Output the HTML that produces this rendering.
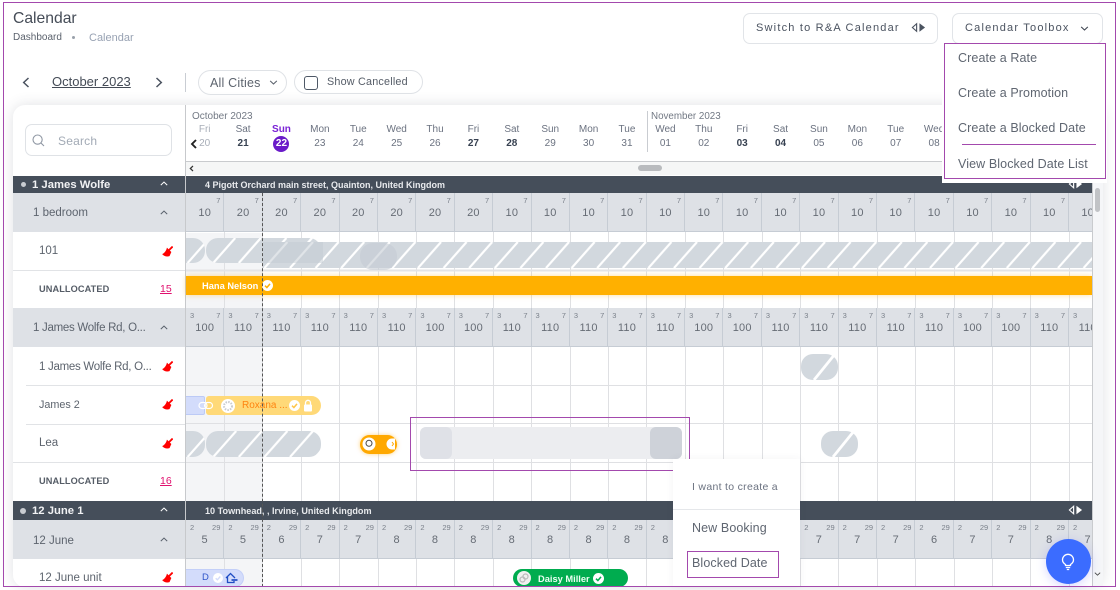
<!DOCTYPE html>
<html lang="en"><head><meta charset="utf-8"><title>Calendar</title>
<style>
*{box-sizing:border-box}
html,body{margin:0;padding:0;width:1120px;height:590px;overflow:hidden;background:#fff;font-family:"Liberation Sans",sans-serif;color:#4b5563}
.t{position:absolute;line-height:0;white-space:nowrap}
.box{position:absolute}
#card{position:absolute;left:13px;top:105px;width:1090px;height:482px;background:#fff;border-radius:12px;box-shadow:0 0 14px rgba(60,70,90,.16)}
.days{position:absolute;left:185.500px;display:flex;width:760px;line-height:12px}
.days span{flex:0 0 38.4px;text-align:center;font-size:10px;color:#6b7280;white-space:nowrap}
.days span.w{font-weight:bold;color:#374151}
.days span.l{color:#a8aeb8}
.g{position:absolute;left:186px;width:906px;height:39px;display:flex;overflow:hidden;background:#dee1e6;border-bottom:1px solid #c6ccd4}
.g i{position:relative;flex:0 0 38.4px;height:39px;border-right:1px solid #c6ccd4;font-style:normal;font-size:11px;color:#666c75;text-align:center;line-height:40px;letter-spacing:.2px}
.g b,.g em{position:absolute;top:3px;font-size:7.5px;line-height:9px;font-weight:normal;font-style:normal;color:#7a808a;letter-spacing:0}
.g b{right:3px}.g em{left:4px}
.lr{position:absolute;left:13px;width:172px;height:39px;background:#dee1e6}
.dk{position:absolute;background:#454e5a}
.sep{position:absolute;height:1px;background:#e1e3e6}
.lbl{font-size:11.5px;color:#5d646e;margin-top:1px}
.un{font-size:9.2px;font-weight:bold;color:#555c66;letter-spacing:.1px}
.cnt{font-size:10.5px;color:#e0106e;text-decoration:underline}
.menu{font-size:12.5px;color:#5f6671;letter-spacing:.1px}
svg.a{position:absolute;overflow:visible}
</style></head><body>
<svg width="0" height="0" style="position:absolute"><defs>
<symbol id="br" viewBox="0 0 12 12"><path d="M11.600.6 7.800 4.400" stroke="#f00" stroke-width="2" fill="none"/><path d="M5.400 1.800 10.200 6.600 8.200 11C5.200 12 2 11 .2 8.800 2.800 7.800 4.600 5.200 5.400 1.800Z" fill="#f00"/></symbol>
<symbol id="up" viewBox="0 0 10 6"><path d="M1 5 5 1.2 9 5" fill="none" stroke="currentColor" stroke-width="1.3"/></symbol>
<symbol id="tg" viewBox="0 0 16 10"><path d="M6 1 1.5 5 6 9Z" fill="none" stroke="currentColor" stroke-width="1.2"/><path d="M9 .5 15 5 9 9.500Z" fill="currentColor"/></symbol>
</defs></svg>

<div id="card"></div>

<svg class="a" style="left:0;top:0" width="1120" height="590">
<defs>
<pattern id="p1" x="187.6" y="242" width="25.6" height="26" patternUnits="userSpaceOnUse"><rect width="25.6" height="26" fill="#d2d8de"/><path d="M0 26 23 0M25.6 26 48.6 0M-25.6 26-2.6 0" stroke="#fff" stroke-width="2.2"/></pattern>
<pattern id="p2" x="187.6" y="238" width="25.6" height="25" patternUnits="userSpaceOnUse"><rect width="25.6" height="25" fill="#d2d8de"/><path d="M0 25 22 0M25.6 25 47.6 0M-25.6 25-3.6 0" stroke="#fff" stroke-width="2.2"/></pattern>
<pattern id="p3" x="187.6" y="431" width="25.6" height="26" patternUnits="userSpaceOnUse"><rect width="25.6" height="26" fill="#d2d8de"/><path d="M0 26 23 0M25.6 26 48.6 0M-25.6 26-2.6 0" stroke="#fff" stroke-width="2.2"/></pattern>
<clipPath id="cg"><rect x="186" y="193" width="906" height="394"/></clipPath>
</defs>
<g clip-path="url(#cg)">
<rect x="186" y="233" width="77" height="76" fill="#f4f5f7"/>
<rect x="186" y="347" width="77" height="154" fill="#f4f5f7"/>
<rect x="186" y="559" width="77" height="28" fill="#f4f5f7"/>
<path stroke="#dfe0e3" stroke-width="1" d="M224.500 193V587M262.500 193V587M301.500 193V587M339.500 193V587M378.500 193V587M416.500 193V587M454.500 193V587M493.500 193V587M531.500 193V587M570.500 193V587M608.500 193V587M646.500 193V587M685.500 193V587M723.500 193V587M762.500 193V587M800.500 193V587M838.500 193V587M877.500 193V587M915.500 193V587M954.500 193V587M992.500 193V587M1030.500 193V587M1069.500 193V587"/>
<path stroke="#dfe0e3" stroke-width="1" d="M186 385.500H1092M186 423.500H1092M186 462.500H1092"/>
<rect x="186" y="269.500" width="906" height="2" fill="#e3e4e7"/>
<rect x="162" y="238" width="43" height="25" rx="12" fill="url(#p2)"/>
<rect x="206" y="238" width="115" height="25" rx="12" fill="url(#p2)"/>
<rect x="263" y="242" width="829" height="26" fill="url(#p1)"/>
<rect x="263" y="242" width="60" height="21" fill="#c2cad1" opacity=".5"/>
<rect x="360" y="243" width="37" height="27" rx="13" fill="#c4ccd3" opacity=".6"/>
<rect x="801" y="354" width="37" height="26" rx="12" fill="#d2d8de"/><path d="M814 380 835 354" stroke="#fff" stroke-width="2.800"/>
<rect x="821" y="431" width="37" height="26" rx="12" fill="#d2d8de"/><path d="M833 457 854 431" stroke="#fff" stroke-width="2.800"/>
<rect x="162" y="431" width="43" height="26" rx="12" fill="url(#p3)"/>
<rect x="206" y="431" width="115" height="26" rx="12" fill="url(#p3)"/>
</g>
</svg>

<!-- outer left / top texts -->
<div class="t" style="left:13px;top:19px;font-size:15.700px;color:#454c57">Calendar</div>
<div class="t" style="left:13px;top:38px;font-size:10px;color:#5b626d">Dashboard</div>
<div class="box" style="left:72px;top:36px;width:3px;height:3px;border-radius:50%;background:#9aa1ab"></div>
<div class="t" style="left:89px;top:38px;font-size:11px;color:#98a2b3">Calendar</div>

<div class="box" style="left:742.500px;top:12.500px;width:195px;height:31px;border:1px solid #e1e4e8;border-radius:7px;background:#fff"></div>
<div class="t" style="left:756px;top:28px;font-size:11px;letter-spacing:1.200px;color:#4b5360">Switch to R&amp;A Calendar</div>
<svg class="a" style="left:911px;top:22px;color:#4b5360" width="15" height="11"><use href="#tg" width="15" height="11"/></svg>
<div class="box" style="left:951.500px;top:12.500px;width:151px;height:31px;border:1px solid #e1e4e8;border-radius:7px;background:#fff"></div>
<div class="t" style="left:965px;top:28px;font-size:11px;letter-spacing:1.200px;color:#4b5360">Calendar Toolbox</div>
<svg class="a" style="left:1080px;top:26px;color:#3f4651;transform:rotate(180deg)" width="9" height="5"><use href="#up" width="9" height="5"/></svg>

<svg class="a" style="left:22px;top:77px" width="8" height="11"><path d="M6.500 1 1.700 5.500 6.500 10" fill="none" stroke="#4b5360" stroke-width="1.500"/></svg>
<div class="t" style="left:52px;top:82px;font-size:13px;color:#444b56;text-decoration:underline;line-height:14px;margin-top:-7px">October 2023</div>
<svg class="a" style="left:155px;top:77px" width="8" height="11"><path d="M1.500 1 6.300 5.500 1.500 10" fill="none" stroke="#4b5360" stroke-width="1.500"/></svg>
<div class="box" style="left:185px;top:73px;width:1px;height:19px;background:#c9cdd3"></div>
<div class="box" style="left:198px;top:69.500px;width:89px;height:25px;border:1px solid #dfe2e6;border-radius:13px"></div>
<div class="t" style="left:210px;top:82.500px;font-size:12.500px;color:#5d646e;letter-spacing:.2px">All Cities</div>
<svg class="a" style="left:269px;top:80px;color:#5d646e;transform:rotate(180deg)" width="9" height="5"><use href="#up" width="9" height="5"/></svg>
<div class="box" style="left:294px;top:70px;width:129px;height:24px;border:1px solid #dfe2e6;border-radius:12px"></div>
<div class="box" style="left:304px;top:75.500px;width:14px;height:14px;border:1.500px solid #4e5866;border-radius:3px"></div>
<div class="t" style="left:327px;top:82px;font-size:10.800px;color:#555c67;letter-spacing:.2px">Show Cancelled</div>

<!-- search -->
<div class="box" style="left:25px;top:124px;width:147px;height:32px;border:1px solid #dfe2e6;border-radius:7px"></div>
<svg class="a" style="left:32px;top:134px" width="13" height="13"><circle cx="5.600" cy="5.600" r="4.600" fill="none" stroke="#8f97a3" stroke-width="1.100"/><path d="M9 9 12 12" stroke="#8f97a3" stroke-width="1.100"/></svg>
<div class="t" style="left:58px;top:140.500px;font-size:12px;color:#a2aab5;letter-spacing:.2px">Search</div>

<div class="box" style="left:185px;top:105px;width:1px;height:482px;background:#c7c9cc"></div>

<!-- date header -->
<div class="t" style="left:192px;top:117px;font-size:10px;color:#727984">October 2023</div>
<div class="t" style="left:651px;top:117px;font-size:9.800px;color:#727984">November 2023</div>
<div class="box" style="left:647px;top:111px;width:1px;height:41px;background:#c9ccd1"></div>
<div class="days" style="top:124px">
<span class="l">Fri</span><span>Sat</span><span style="color:#7a22d6;font-weight:bold">Sun</span><span>Mon</span><span>Tue</span><span>Wed</span><span>Thu</span><span>Fri</span><span>Sat</span><span>Sun</span><span>Mon</span><span>Tue</span><span>Wed</span><span>Thu</span><span>Fri</span><span>Sat</span><span>Sun</span><span>Mon</span><span>Tue</span><span>Wed</span>
</div>
<div class="box" style="left:273px;top:136px;width:16px;height:16px;border-radius:50%;background:#6a1bc9"></div>
<div class="days" style="top:138px">
<span class="l">20</span><span class="w">21</span><span style="color:#fff;font-weight:bold">22</span><span>23</span><span>24</span><span>25</span><span>26</span><span class="w">27</span><span class="w">28</span><span>29</span><span>30</span><span>31</span><span>01</span><span>02</span><span class="w">03</span><span class="w">04</span><span>05</span><span>06</span><span>07</span><span>08</span>
</div>
<svg class="a" style="left:190px;top:139px" width="8" height="10"><path d="M6 1 2 5 6 9" fill="none" stroke="#222" stroke-width="1.900"/></svg>

<!-- h scroll -->
<div class="box" style="left:186px;top:161px;width:906px;height:14px;background:#f5f6f6;border-top:1px solid #c9cbce"></div>
<svg class="a" style="left:189px;top:165px" width="5" height="7"><path d="M4 1 1.300 3.500 4 6" fill="none" stroke="#333" stroke-width="1.200"/></svg>
<div class="box" style="left:638px;top:165px;width:24px;height:6px;border-radius:3px;background:#b9bbbe"></div>

<!-- property 1 -->
<div class="dk" style="left:13px;top:175.500px;width:172px;height:18px"></div>
<div class="dk" style="left:186px;top:175.500px;width:906px;height:18px"></div>
<div class="box" style="left:20.500px;top:181.500px;width:5px;height:5px;border-radius:50%;background:#c9ccd1"></div>
<div class="t" style="left:32px;top:185px;font-size:11.300px;font-weight:bold;color:#f1f2f4">1 James Wolfe</div>
<svg class="a" style="left:160px;top:181px;color:#fff" width="8" height="5"><use href="#up" width="8" height="5"/></svg>
<div class="t" style="left:205px;top:184.500px;font-size:9px;font-weight:bold;color:#e8eaed">4 Pigott Orchard main street, Quainton, United Kingdom</div>
<svg class="a" style="left:1068px;top:179px;color:#fff" width="15" height="10"><use href="#tg" width="15" height="10"/></svg>

<div class="lr" style="top:193px"></div>
<div class="t lbl" style="left:33px;top:212px">1 bedroom</div>
<svg class="a" style="left:160px;top:210px;color:#59616c" width="8" height="5"><use href="#up" width="8" height="5"/></svg>
<div class="g" style="top:193px">
<i><b>7</b>10</i><i><b>7</b>20</i><i><b>7</b>20</i><i><b>7</b>20</i><i><b>7</b>20</i><i><b>7</b>20</i><i><b>7</b>20</i><i><b>7</b>20</i><i><b>7</b>10</i><i><b>7</b>10</i><i><b>7</b>10</i><i><b>7</b>10</i><i><b>7</b>10</i><i><b>7</b>10</i><i><b>7</b>10</i><i><b>7</b>10</i><i><b>7</b>10</i><i><b>7</b>10</i><i><b>7</b>10</i><i><b>7</b>10</i><i><b>7</b>10</i><i><b>7</b>10</i><i><b>7</b>10</i><i><b>7</b>10</i>
</div>
<div class="t lbl" style="left:39px;top:250px">101</div>
<svg class="a" style="left:162px;top:246px" width="11" height="11"><use href="#br" width="11" height="11"/></svg>
<div class="sep" style="left:13px;top:270px;width:172px"></div>
<div class="t un" style="left:39px;top:288.500px">UNALLOCATED</div>
<div class="t cnt" style="left:160px;top:288.500px;line-height:12px;margin-top:-6px">15</div>

<!-- orange bar -->
<div class="box" style="left:186px;top:276px;width:906px;height:19px;background:#ffb000;box-shadow:0 0 6px rgba(255,176,0,.4)"></div>
<div class="t" style="left:202px;top:285.500px;font-size:9.300px;font-weight:bold;color:#fff">Hana Nelson</div>
<svg class="a" style="left:262px;top:280px" width="11" height="11"><circle cx="5.500" cy="5.500" r="5.500" fill="#fff"/><path d="M3 5.700 4.900 7.500 8 3.900" fill="none" stroke="#ffb000" stroke-width="1.500"/></svg>

<div class="lr" style="top:308px"></div>
<div class="t lbl" style="left:33px;top:327px;letter-spacing:-.28px">1 James Wolfe Rd, O...</div>
<svg class="a" style="left:160px;top:325px;color:#59616c" width="8" height="5"><use href="#up" width="8" height="5"/></svg>
<div class="g" style="top:308px">
<i><em>3</em><b>7</b>100</i><i><em>3</em><b>7</b>110</i><i><em>3</em><b>7</b>110</i><i><em>3</em><b>7</b>110</i><i><em>3</em><b>7</b>110</i><i><em>3</em><b>7</b>110</i><i><em>3</em><b>7</b>100</i><i><em>3</em><b>7</b>100</i><i><em>3</em><b>7</b>110</i><i><em>3</em><b>7</b>110</i><i><em>3</em><b>7</b>110</i><i><em>3</em><b>7</b>110</i><i><em>3</em><b>7</b>110</i><i><em>3</em><b>7</b>100</i><i><em>3</em><b>7</b>100</i><i><em>3</em><b>7</b>110</i><i><em>3</em><b>7</b>110</i><i><em>3</em><b>7</b>110</i><i><em>3</em><b>7</b>110</i><i><em>3</em><b>7</b>110</i><i><em>3</em><b>7</b>100</i><i><em>3</em><b>7</b>100</i><i><em>3</em><b>7</b>110</i><i><em>3</em><b>7</b>110</i>
</div>
<div class="t lbl" style="left:39px;top:366px;letter-spacing:-.28px">1 James Wolfe Rd, O...</div>
<svg class="a" style="left:162px;top:361px" width="11" height="11"><use href="#br" width="11" height="11"/></svg>
<div class="sep" style="left:26px;top:385px;width:159px"></div>
<div class="t lbl" style="left:39px;top:404px;font-size:10.800px">James 2</div>
<svg class="a" style="left:162px;top:399px" width="11" height="11"><use href="#br" width="11" height="11"/></svg>
<div class="sep" style="left:26px;top:424px;width:159px"></div>
<div class="t lbl" style="left:39px;top:442px">Lea</div>
<svg class="a" style="left:162px;top:438px" width="11" height="11"><use href="#br" width="11" height="11"/></svg>
<div class="sep" style="left:13px;top:462px;width:172px"></div>
<div class="t un" style="left:39px;top:481px">UNALLOCATED</div>
<div class="t cnt" style="left:160px;top:481px;line-height:12px;margin-top:-6px">16</div>

<!-- James 2 bookings -->
<div class="box" style="left:186px;top:396px;width:19px;height:19px;background:#d3dcfb;border:1px solid #bccaf6;border-left:0;border-radius:0 2px 2px 0"></div>
<div class="box" style="left:206px;top:396px;width:115px;height:19px;background:#ffd978;border-radius:3px 10px 10px 3px"></div>
<svg class="a" style="left:198px;top:400px" width="16" height="11"><rect x="1" y="2.500" width="8" height="6" rx="3" fill="none" stroke="#fff" stroke-width="1.200"/><rect x="6.500" y="2.500" width="8" height="6" rx="3" fill="none" stroke="#fff" stroke-width="1.200"/></svg>
<svg class="a" style="left:221px;top:398.500px" width="14" height="14"><circle cx="7" cy="7" r="7" fill="#fff"/><circle cx="7" cy="7" r="4" fill="none" stroke="#c9ccd1" stroke-width="2" stroke-dasharray="1.500 1.200"/></svg>
<div class="t" style="left:242px;top:405.500px;font-size:10px;color:#ff8410">Roxana ...</div>
<svg class="a" style="left:289px;top:400px" width="11" height="11"><circle cx="5.500" cy="5.500" r="5.500" fill="#fff"/><path d="M3 5.700 4.900 7.500 8 3.900" fill="none" stroke="#ffc64a" stroke-width="1.500"/></svg>
<svg class="a" style="left:303px;top:399px" width="10" height="13"><path d="M2.500 6V3.800a2.500 2.500 0 0 1 5 0V6" fill="none" stroke="#fff" stroke-width="1.300"/><rect x="1" y="5.500" width="8" height="7" rx="1" fill="#fff"/></svg>

<!-- Lea pill -->
<div class="box" style="left:360px;top:435px;width:37px;height:18.500px;border-radius:10px;background:#ffa800;box-shadow:0 0 4px rgba(255,168,0,.5)"></div>
<svg class="a" style="left:362px;top:437px" width="14" height="14"><circle cx="7" cy="7" r="6.500" fill="#fff"/><circle cx="7" cy="6.300" r="3" fill="none" stroke="#444" stroke-width="1"/></svg>
<svg class="a" style="left:387px;top:438px" width="9" height="12"><path d="M5 .5a5.500 5.500 0 0 0 0 11h3V.5Z" fill="#fff"/><path d="M5 4 6.500 6 5 8" fill="none" stroke="#ffa800"/></svg>

<!-- selection -->
<div class="box" style="left:419.500px;top:427px;width:262px;height:32px;border-radius:6px;background:#ecedf0"></div>
<div class="box" style="left:419.500px;top:427px;width:32.500px;height:32px;border-radius:6px;background:#dfe1e7"></div>
<div class="box" style="left:649.500px;top:427px;width:32px;height:32px;border-radius:6px;background:#ced2d9"></div>
<div class="box" style="left:410px;top:417px;width:279.500px;height:54px;border:1px solid #a349ad"></div>

<!-- property 2 -->
<div class="dk" style="left:13px;top:501px;width:172px;height:19px"></div>
<div class="dk" style="left:186px;top:501px;width:906px;height:19px"></div>
<div class="box" style="left:20px;top:507.500px;width:6px;height:6px;border-radius:50%;background:#c9ccd1"></div>
<div class="t" style="left:32px;top:511px;font-size:11.300px;font-weight:bold;color:#f1f2f4">12 June 1</div>
<svg class="a" style="left:160px;top:507px;color:#fff" width="8" height="5"><use href="#up" width="8" height="5"/></svg>
<div class="t" style="left:205px;top:510.500px;font-size:9.100px;font-weight:bold;color:#e8eaed">10 Townhead, , Irvine, United Kingdom</div>
<svg class="a" style="left:1068px;top:505px;color:#fff" width="15" height="10"><use href="#tg" width="15" height="10"/></svg>

<div class="lr" style="top:520px"></div>
<div class="t lbl" style="left:33px;top:539.500px">12 June</div>
<svg class="a" style="left:160px;top:537px;color:#59616c" width="8" height="5"><use href="#up" width="8" height="5"/></svg>
<div class="g" style="top:520px">
<i><em>2</em><b>29</b>5</i><i><em>2</em><b>29</b>5</i><i><em>2</em><b>29</b>6</i><i><em>2</em><b>29</b>7</i><i><em>2</em><b>29</b>7</i><i><em>2</em><b>29</b>8</i><i><em>2</em><b>29</b>8</i><i><em>2</em><b>29</b>8</i><i><em>2</em><b>29</b>8</i><i><em>2</em><b>29</b>8</i><i><em>2</em><b>29</b>8</i><i><em>2</em><b>29</b>8</i><i><em>2</em><b>29</b>8</i><i><em>2</em><b>29</b>8</i><i><em>2</em><b>29</b>8</i><i><em>2</em><b>29</b>7</i><i><em>2</em><b>29</b>7</i><i><em>2</em><b>29</b>7</i><i><em>2</em><b>29</b>7</i><i><em>2</em><b>29</b>6</i><i><em>2</em><b>29</b>7</i><i><em>2</em><b>29</b>7</i><i><em>2</em><b>29</b>8</i><i><em>2</em><b>29</b>7</i>
</div>
<div class="t lbl" style="left:39px;top:577px">12 June unit</div>
<svg class="a" style="left:162px;top:572px" width="11" height="11"><use href="#br" width="11" height="11"/></svg>

<!-- bottom bookings -->
<div class="box" style="left:186px;top:569px;width:58px;height:18px;border-radius:0 10px 10px 0;background:#d3dcfb;border:1px solid #c3cff8;border-left:0"></div>
<div class="t" style="left:202px;top:578px;font-size:9.500px;color:#2f55c9">D</div>
<svg class="a" style="left:213px;top:573px" width="10" height="10"><circle cx="5" cy="5" r="5" fill="#fff"/><path d="M2.700 5.200 4.400 6.800 7.300 3.500" fill="none" stroke="#d3dcfb" stroke-width="1.400"/></svg>
<svg class="a" style="left:225px;top:572px" width="13" height="12"><path d="M1 6 5.500 1.500 10 6M2.500 5V10.500H9V9" fill="none" stroke="#1f4dc4" stroke-width="1.300"/><path d="M6.500 8H12.500" stroke="#1f4dc4" stroke-width="1.700"/></svg>

<div class="box" style="left:513px;top:569px;width:115px;height:18px;border-radius:9px;background:#00ac4f"></div>
<svg class="a" style="left:517px;top:571px" width="14" height="14"><circle cx="7" cy="7" r="7" fill="#f0f0f0"/><circle cx="5.500" cy="8.500" r="2.500" fill="none" stroke="#bbb" stroke-width="1.200"/><circle cx="8.500" cy="5.500" r="2.500" fill="none" stroke="#bbb" stroke-width="1.200"/></svg>
<div class="t" style="left:538px;top:578.500px;font-size:9.300px;font-weight:bold;color:#eafff2">Daisy Miller</div>
<svg class="a" style="left:593px;top:572.500px" width="11" height="11"><circle cx="5.500" cy="5.500" r="5.500" fill="#fff"/><path d="M3 5.700 4.900 7.500 8 3.900" fill="none" stroke="#00ac4f" stroke-width="1.500"/></svg>

<!-- dashed today line -->
<div class="box" style="left:262px;top:193px;width:0;height:394px;border-left:1px dashed #555"></div>

<!-- v scroll -->
<div class="box" style="left:1092px;top:183px;width:11px;height:404px;background:#f5f6f8;border-left:1px solid #c9cbce"></div>
<div class="box" style="left:1095px;top:188px;width:5px;height:24px;border-radius:3px;background:#c1c3c6"></div>
<svg class="a" style="left:1093.500px;top:572px;color:#444;transform:rotate(180deg)" width="7" height="4"><use href="#up" width="7" height="4"/></svg>

<!-- create popup -->
<div class="box" style="left:673px;top:459px;width:127px;height:128px;background:#fff;box-shadow:0 0 8px rgba(60,70,90,.06)"></div>
<div class="t" style="left:692px;top:487px;font-size:10.500px;color:#6b7280;letter-spacing:.3px">I want to create a</div>
<div class="box" style="left:673px;top:509px;width:127px;height:1px;background:#e5e7ea"></div>
<div class="t menu" style="left:692px;top:528px">New Booking</div>
<div class="t menu" style="left:692px;top:563px">Blocked Date</div>
<div class="box" style="left:687px;top:551px;width:92px;height:27px;border:1px solid #a349ad"></div>

<!-- toolbox dropdown -->
<div class="box" style="left:942px;top:43px;width:165px;height:140px;background:#fff"></div>
<div class="box" style="left:944px;top:43px;width:162px;height:136px;border:1px solid #a349ad"></div>
<div class="t menu" style="left:958px;top:58px">Create a Rate</div>
<div class="t menu" style="left:958px;top:93px">Create a Promotion</div>
<div class="t menu" style="left:958px;top:128px">Create a Blocked Date</div>
<div class="box" style="left:962px;top:144px;width:134px;height:1px;background:#a349ad"></div>
<div class="t menu" style="left:958px;top:164px">View Blocked Date List</div>

<!-- FAB -->
<div class="box" style="left:1046px;top:539px;width:45px;height:45px;border-radius:50%;background:#3b6cff;box-shadow:0 2px 10px rgba(90,90,255,.25)"></div>
<svg class="a" style="left:1061px;top:553px" width="14" height="18"><path d="M4.500 11.500C2.800 10.500 1.500 8.800 1.500 6.800a5.500 5.500 0 0 1 11 0c0 2-1.300 3.700-3 4.700V12.500h-5Z" fill="none" stroke="#fff" stroke-width="1.300"/><path d="M4.800 14.500H9.200M5.800 16.500H8.200" stroke="#fff" stroke-width="1.200"/></svg>

<!-- outer frame -->
<div class="box" style="left:3px;top:2px;width:1113px;height:585px;border:1px solid #a349ad;pointer-events:none"></div>
</body></html>
